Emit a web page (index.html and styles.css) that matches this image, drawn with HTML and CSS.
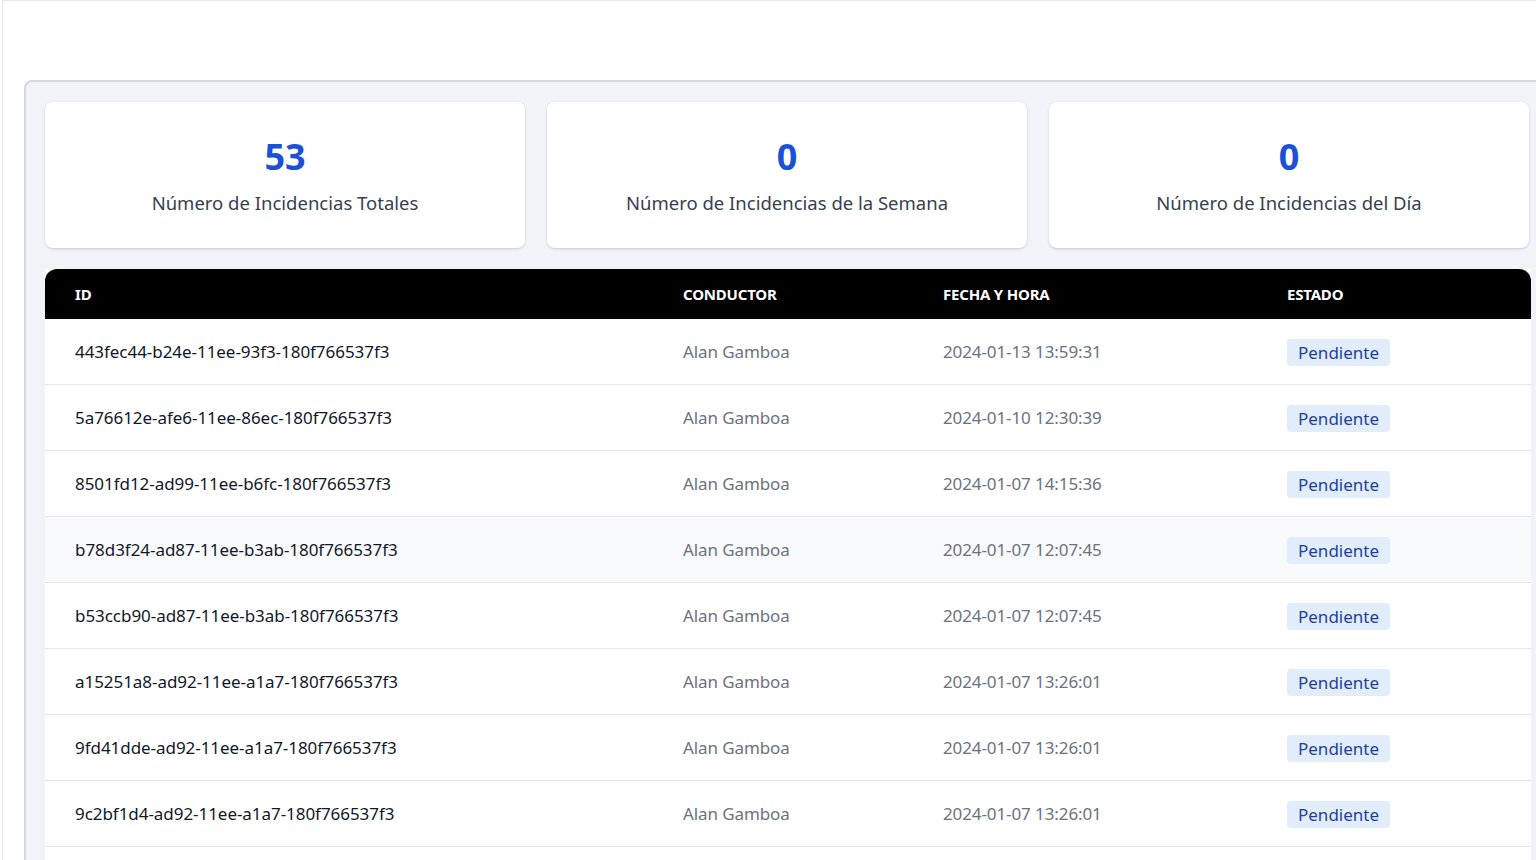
FILE: index.html
```html
<!DOCTYPE html>
<html lang="es">
<head>
<meta charset="utf-8">
<title>Incidencias</title>
<link rel="stylesheet" href="styles.css">
</head>
<body>
<div class="frame">
  <div class="panel">
    <div class="stats">
      <div class="card"><div class="num">53</div><div class="label">Número de Incidencias Totales</div></div>
      <div class="card"><div class="num">0</div><div class="label">Número de Incidencias de la Semana</div></div>
      <div class="card"><div class="num">0</div><div class="label">Número de Incidencias del Día</div></div>
    </div>
    <table class="tbl">
      <thead>
        <tr><th class="c-id">ID</th><th class="c-con">CONDUCTOR</th><th class="c-fecha">FECHA Y HORA</th><th class="c-est">ESTADO</th></tr>
      </thead>
      <tbody>
        <tr><td class="id">443fec44-b24e-11ee-93f3-180f766537f3</td><td class="muted">Alan Gamboa</td><td class="muted">2024-01-13 13:59:31</td><td><span class="badge">Pendiente</span></td></tr>
        <tr><td class="id">5a76612e-afe6-11ee-86ec-180f766537f3</td><td class="muted">Alan Gamboa</td><td class="muted">2024-01-10 12:30:39</td><td><span class="badge">Pendiente</span></td></tr>
        <tr><td class="id">8501fd12-ad99-11ee-b6fc-180f766537f3</td><td class="muted">Alan Gamboa</td><td class="muted">2024-01-07 14:15:36</td><td><span class="badge">Pendiente</span></td></tr>
        <tr class="hover"><td class="id">b78d3f24-ad87-11ee-b3ab-180f766537f3</td><td class="muted">Alan Gamboa</td><td class="muted">2024-01-07 12:07:45</td><td><span class="badge">Pendiente</span></td></tr>
        <tr><td class="id">b53ccb90-ad87-11ee-b3ab-180f766537f3</td><td class="muted">Alan Gamboa</td><td class="muted">2024-01-07 12:07:45</td><td><span class="badge">Pendiente</span></td></tr>
        <tr><td class="id">a15251a8-ad92-11ee-a1a7-180f766537f3</td><td class="muted">Alan Gamboa</td><td class="muted">2024-01-07 13:26:01</td><td><span class="badge">Pendiente</span></td></tr>
        <tr><td class="id">9fd41dde-ad92-11ee-a1a7-180f766537f3</td><td class="muted">Alan Gamboa</td><td class="muted">2024-01-07 13:26:01</td><td><span class="badge">Pendiente</span></td></tr>
        <tr><td class="id">9c2bf1d4-ad92-11ee-a1a7-180f766537f3</td><td class="muted">Alan Gamboa</td><td class="muted">2024-01-07 13:26:01</td><td><span class="badge">Pendiente</span></td></tr>
        <tr class="spacer"><td></td><td></td><td></td><td></td></tr>
      </tbody>
    </table>
  </div>
</div>
</body>
</html>
```

FILE: styles.css
```css
html, body {
  margin: 0;
  padding: 0;
  background: #ffffff;
  overflow: hidden;
  height: 860px;
}
body {
  font-family: "Noto Sans", "Open Sans", sans-serif;
  color: #111827;
}
.frame {
  margin-left: 2px;
  border-top: 1px solid #e5e7eb;
  border-left: 1px solid #e5e7eb;
  padding: 79px 0 0 21px;
  height: 860px;
  box-sizing: border-box;
  width: 1580px;
  overflow: hidden;
}
.panel {
  background: #f0f4f8;
  border: 2px solid #d4d8de;
  border-right: none;
  border-bottom: none;
  border-radius: 8px 0 0 0;
  padding: 20px 0 0 19px;
  width: 1535px;
  box-sizing: border-box;
  height: 790px;
  overflow: hidden;
}
.stats {
  display: flex;
  gap: 22px;
  width: 1486px;
}
.card {
  flex: 0 0 480px;
  height: 146px;
  background: #ffffff;
  border-radius: 8px;
  box-shadow: 0 1px 3px rgba(0,0,0,0.12), 0 1px 2px rgba(0,0,0,0.06);
  display: flex;
  flex-direction: column;
  align-items: center;
  justify-content: center;
  gap: 13px;
  box-sizing: border-box;
  padding-top: 2px;
}
.num {
  font-size: 36px;
  font-weight: 700;
  color: #1b51d6;
  line-height: 40px;
}
.label {
  font-size: 18.5px;
  color: #374151;
  line-height: 26px;
  letter-spacing: 0;
}
.tbl {
  margin-top: 21px;
  width: 1486px;
  border-collapse: separate;
  border-spacing: 0;
  table-layout: fixed;
  background: #ffffff;
}
.tbl th {
  background: #000000;
  color: #ffffff;
  font-size: 15px;
  font-weight: 700;
  text-align: left;
  height: 50px;
  padding: 0 0 0 30px;
  letter-spacing: -0.2px;
}
.c-id { width: 578px; border-top-left-radius: 12px; }
.c-con { width: 230px; }
.c-fecha { width: 314px; }
.c-est { border-top-right-radius: 12px; }
.tbl td {
  height: 65px;
  padding: 0 0 0 30px;
  border-bottom: 1px solid #e5e7eb;
  font-size: 17px;
  white-space: nowrap;
}
.tbl td.id {
  color: #111827;
  font-size: 17px;
  letter-spacing: -0.05px;
}
.tbl td.muted {
  color: #6b7280;
  letter-spacing: -0.1px;
}
.tbl tr.hover td {
  background: #f9fafb;
}
.tbl tr.spacer td {
  border-bottom: none;
}
.badge {
  display: inline-block;
  background: #e1edfb;
  color: #1e3f9a;
  font-size: 17px;
  line-height: 27px;
  padding: 0 11px;
  border-radius: 4px;
  margin-top: 2px;
}
```
